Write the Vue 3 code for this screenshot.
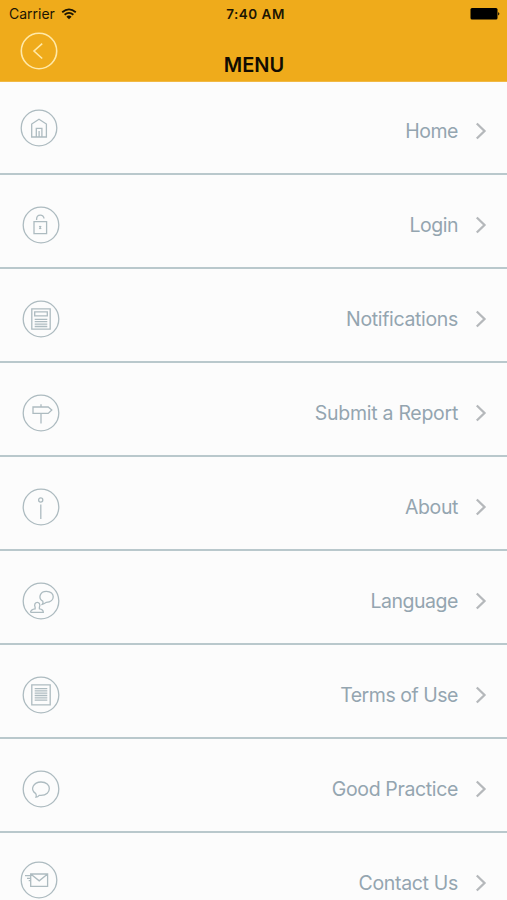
<script setup>
import { ref } from 'vue';

const items = ref([
  { id: 'home', label: 'Home', spacing: -0.45 },
  { id: 'login', label: 'Login', spacing: -0.5 },
  { id: 'notifications', label: 'Notifications', spacing: -0.34 },
  { id: 'report', label: 'Submit a Report', spacing: -0.28 },
  { id: 'about', label: 'About', spacing: -0.4 },
  { id: 'language', label: 'Language', spacing: -0.47 },
  { id: 'terms', label: 'Terms of Use', spacing: -0.47 },
  { id: 'practice', label: 'Good Practice', spacing: -0.36 },
  { id: 'contact', label: 'Contact Us', spacing: -0.32 },
]);

// the icons are drawn around the centre of their circle
const icons = {
  home: 'M-7.3 9V-4L0-8.7L7.4-4V9ZM-2.7 9V.3H2.9V9M.1 9V3',
  login: 'M-7-3.4H5.6V8.6H-7ZM-4.4-5V-6C-4.4-11.2 3-11.2 3-6.4M-1.6 1L0 4M0 1L-1.6 4',
  notifications: 'M-9.2-10.2H9.2V10.2H-9.2ZM-6.3-7.2H6.3V-3.2H-6.3ZM-6.3 .3H6.3M-6.3 2.7H6.3M-6.3 5.1H6.3M-6.3 7.5H6.3',
  report: 'M-8-6H7.2L10.8-3L7.2 .4H-8ZM0-8.7V-6M0 .4V10.5',
  about: 'M-2.4-7A2.1 2.1 0 1 0 1.8-7A2.1 2.1 0 1 0-2.4-7M-.2-2.4V12',
  language: 'M2 .4C-3.4-2.8-1.2-9.6 5.4-9.6C14.6-9.6 14.4 1.2 5.4 1.3Q3.4 2.8 1.3 3.3Q2.3 2 2 .4M-10.6 11.3H2.3Q2.3 8.3-1.6 7.8V6.3C1-.2-8.5-.2-5.9 6.3V7.8Q-10 8.3-10.6 11.3',
  terms: 'M-9.2-10.2H9.2V9.8H-9.2ZM-6.3-6.4H6.3M-6.3-4.1H6.3M-6.3-1.8H6.3M-6.3 .5H6.3M-6.3 2.8H6.3M-6.3 5.1H6.3',
  practice: 'M-5.2 4.6C-11.6 .6-7.5-7 0-7C11-7 11.2 6.2 0 6.3H-1.8Q-3.2 8-5 8.2Q-4.3 6.5-5.2 4.6',
  contact: 'M-8.3-6H8.6V6.3H-8.3ZM-8.3-6L.2 .8L8.6-6M-14-4.3H-8.3M-12-1.7H-8.3M-10.3 .6H-8.3',
};
</script>

<template>
  <div class="screen">
    <header class="header">
      <div class="status">
        <div class="carrier">
          <span>Carrier</span>
          <svg class="wifi" width="16" height="12" viewBox="0 0 16 12">
            <path d="M1.2 4.2Q8-1.5 14.8 4.2M3.6 6.8Q8 3 12.4 6.8" fill="none" stroke="#1c1503" stroke-width="1.8" />
            <path d="M5.4 8.7Q8 6.5 10.6 8.7L8 11.3Z" fill="#1c1503" />
          </svg>
        </div>
        <span class="time">7:40 AM</span>
        <svg class="battery" width="30" height="12" viewBox="0 0 30 12">
          <rect x="0.5" y="0" width="27" height="11.5" rx="1.5" />
          <path d="M28.2 4Q30.5 5.8 28.2 7.6Z" />
        </svg>
      </div>
      <div class="bar">
        <svg class="back" width="38" height="38" viewBox="-19 -19 38 38">
          <circle r="17.7" />
          <path d="M3.2-7.3L-5 0L3.2 7.5" />
        </svg>
        <h1 class="title">MENU</h1>
      </div>
    </header>

    <ul class="menu">
      <li v-for="item in items" :key="item.id" class="item" :class="item.id">
        <svg class="icon" width="38" height="38" viewBox="-19 -19 38 38">
          <circle r="17.8" />
          <path :d="icons[item.id]" />
        </svg>
        <span class="label" :style="{ letterSpacing: item.spacing + 'px' }">{{ item.label }}</span>
        <svg class="chevron" width="12" height="18" viewBox="0 0 12 18">
          <path d="M1.8 1.5L9.5 9L1.8 16.5" />
        </svg>
      </li>
    </ul>
  </div>
</template>

<style>
body {
  margin: 0;
  overflow: hidden;
}
</style>

<style scoped>
.screen {
  width: 507px;
  height: 900px;
  overflow: hidden;
  background-color: #fcfcfc;
  font-family: Inter, "Liberation Sans", sans-serif;
}

.header {
  box-sizing: border-box;
  height: 82px;
  background-color: #efab1b;
  border-bottom: 1px solid #f1b945;
}

.status {
  display: grid;
  grid-template-columns: 1fr auto 1fr;
  align-items: center;
  height: 27px;
  padding: 0 7px 0 9px;
  font-size: 14px;
  color: #1c1503;
}

.carrier {
  display: flex;
  align-items: center;
  gap: 6px;
}

.time {
  font-weight: 600;
  font-size: 13.5px;
  letter-spacing: 0.5px;
  padding-left: 2px;
}

.battery {
  justify-self: end;
  fill: #000;
}

.bar {
  display: grid;
  grid-template-columns: 80px 1fr 80px;
  height: 54px;
}

.back {
  margin: 5px 0 0 20px;
  fill: none;
  stroke: #ffe9a8;
  stroke-width: 1.6;
}

.title {
  margin: 25px 0 0 1px;
  text-align: center;
  font-size: 20px;
  line-height: 26px;
  font-weight: 600;
  color: #110c02;
}

.menu {
  margin: -1px 0 0;
  padding: 0;
  list-style: none;
}

.item {
  display: flex;
  align-items: center;
  box-sizing: border-box;
  height: 94px;
  padding: 7px 20px 0 22px;
  border-bottom: 2px solid #b9c8cc;
}

.item.home,
.item.contact {
  padding-left: 20px;
}

.icon {
  flex: none;
  fill: none;
  stroke: #adbbc0;
  stroke-width: 1.3;
}

.home .icon,
.contact .icon {
  margin-bottom: 5px;
}

.label {
  flex: 1;
  text-align: right;
  font-size: 19.5px;
  line-height: 28px;
  color: #94a5b0;
}

.chevron {
  margin-left: 17px;
  fill: none;
  stroke: #b5b8bb;
  stroke-width: 2.3;
}
</style>
